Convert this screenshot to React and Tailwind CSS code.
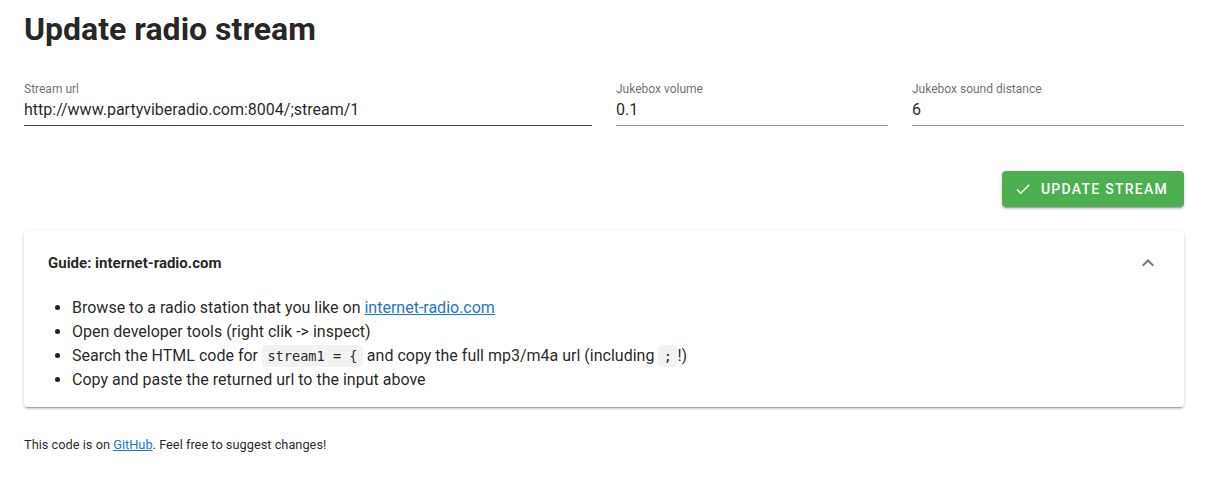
import React from "react";

export default function App() {
  return (
    <div className="min-h-[482px] bg-white pl-6 pr-[22px] pt-[9px] text-[rgba(0,0,0,0.87)] font-['Roboto',sans-serif]">
      <h1 className="text-[32px] leading-[40px] font-bold tracking-normal">Update radio stream</h1>

      <div className="mt-[32px] grid grid-cols-[568fr_272fr_272fr] gap-6">
        <Field label="Stream url" value="http://www.partyviberadio.com:8004/;stream/1" dark />
        <Field label="Jukebox volume" value="0.1" />
        <Field label="Jukebox sound distance" value="6" />
      </div>

      <div className="mt-[45px] flex justify-end">
        <button className="flex h-9 items-center gap-[9px] rounded bg-[#4caf50] pl-3 pr-4 text-[14px] font-medium uppercase tracking-[0.09em] text-white shadow-[0_3px_1px_-2px_rgba(0,0,0,0.2),0_2px_2px_0_rgba(0,0,0,0.14),0_1px_5px_0_rgba(0,0,0,0.12)]">
          <svg width="18" height="18" viewBox="0 0 24 24" fill="currentColor">
            <path d="M21,7L9,19L3.5,13.5L4.91,12.09L9,16.17L19.59,5.59L21,7Z" />
          </svg>
          Update stream
        </button>
      </div>

      <div className="mt-6 rounded bg-white shadow-[0_3px_1px_-2px_rgba(0,0,0,0.2),0_2px_2px_0_rgba(0,0,0,0.14),0_1px_5px_0_rgba(0,0,0,0.12)]">
        <div className="flex h-16 items-center justify-between px-6">
          <span className="text-[15px] font-bold">Guide: internet-radio.com</span>
          <svg width="24" height="24" viewBox="0 0 24 24" fill="rgba(0,0,0,0.54)">
            <path d="M7.41,15.41L12,10.83L16.59,15.41L18,14L12,8L6,14L7.41,15.41Z" />
          </svg>
        </div>
        <ul className="list-disc pl-12 pb-[15px] text-[16px] leading-6 mt-[1px]">
          <li>
            Browse to a radio station that you like on{" "}
            <a href="#" className="text-[#1976d2] underline">internet-radio.com</a>
          </li>
          <li>Open developer tools (right clik -&gt; inspect)</li>
          <li>
            Search the HTML code for <Code>stream1 = {"{"}</Code> and copy the full mp3/m4a url (including <Code>;</Code>!)
          </li>
          <li>Copy and paste the returned url to the input above</li>
        </ul>
      </div>

      <p className="mt-[30px] text-[12.8px] leading-4">
        This code is on <a href="#" className="text-[#1976d2] underline">GitHub</a>. Feel free to suggest changes!
      </p>
    </div>
  );
}

function Code({ children }) {
  return (
    <code className="rounded bg-[rgba(0,0,0,0.05)] px-[0.4em] py-[0.2em] font-['DejaVu_Sans_Mono',monospace] text-[85%] font-normal">
      {children}
    </code>
  );
}

function Field({ label, value, dark }) {
  return (
    <div>
      <div className="text-[12px] leading-4 text-[rgba(0,0,0,0.6)]">{label}</div>
      <div
        className={
          "mt-[1px] pb-[3px] text-[16px] leading-6 border-b " +
          (dark ? "border-[rgba(0,0,0,0.75)]" : "border-[rgba(0,0,0,0.42)]")
        }
      >
        {value}
      </div>
    </div>
  );
}
